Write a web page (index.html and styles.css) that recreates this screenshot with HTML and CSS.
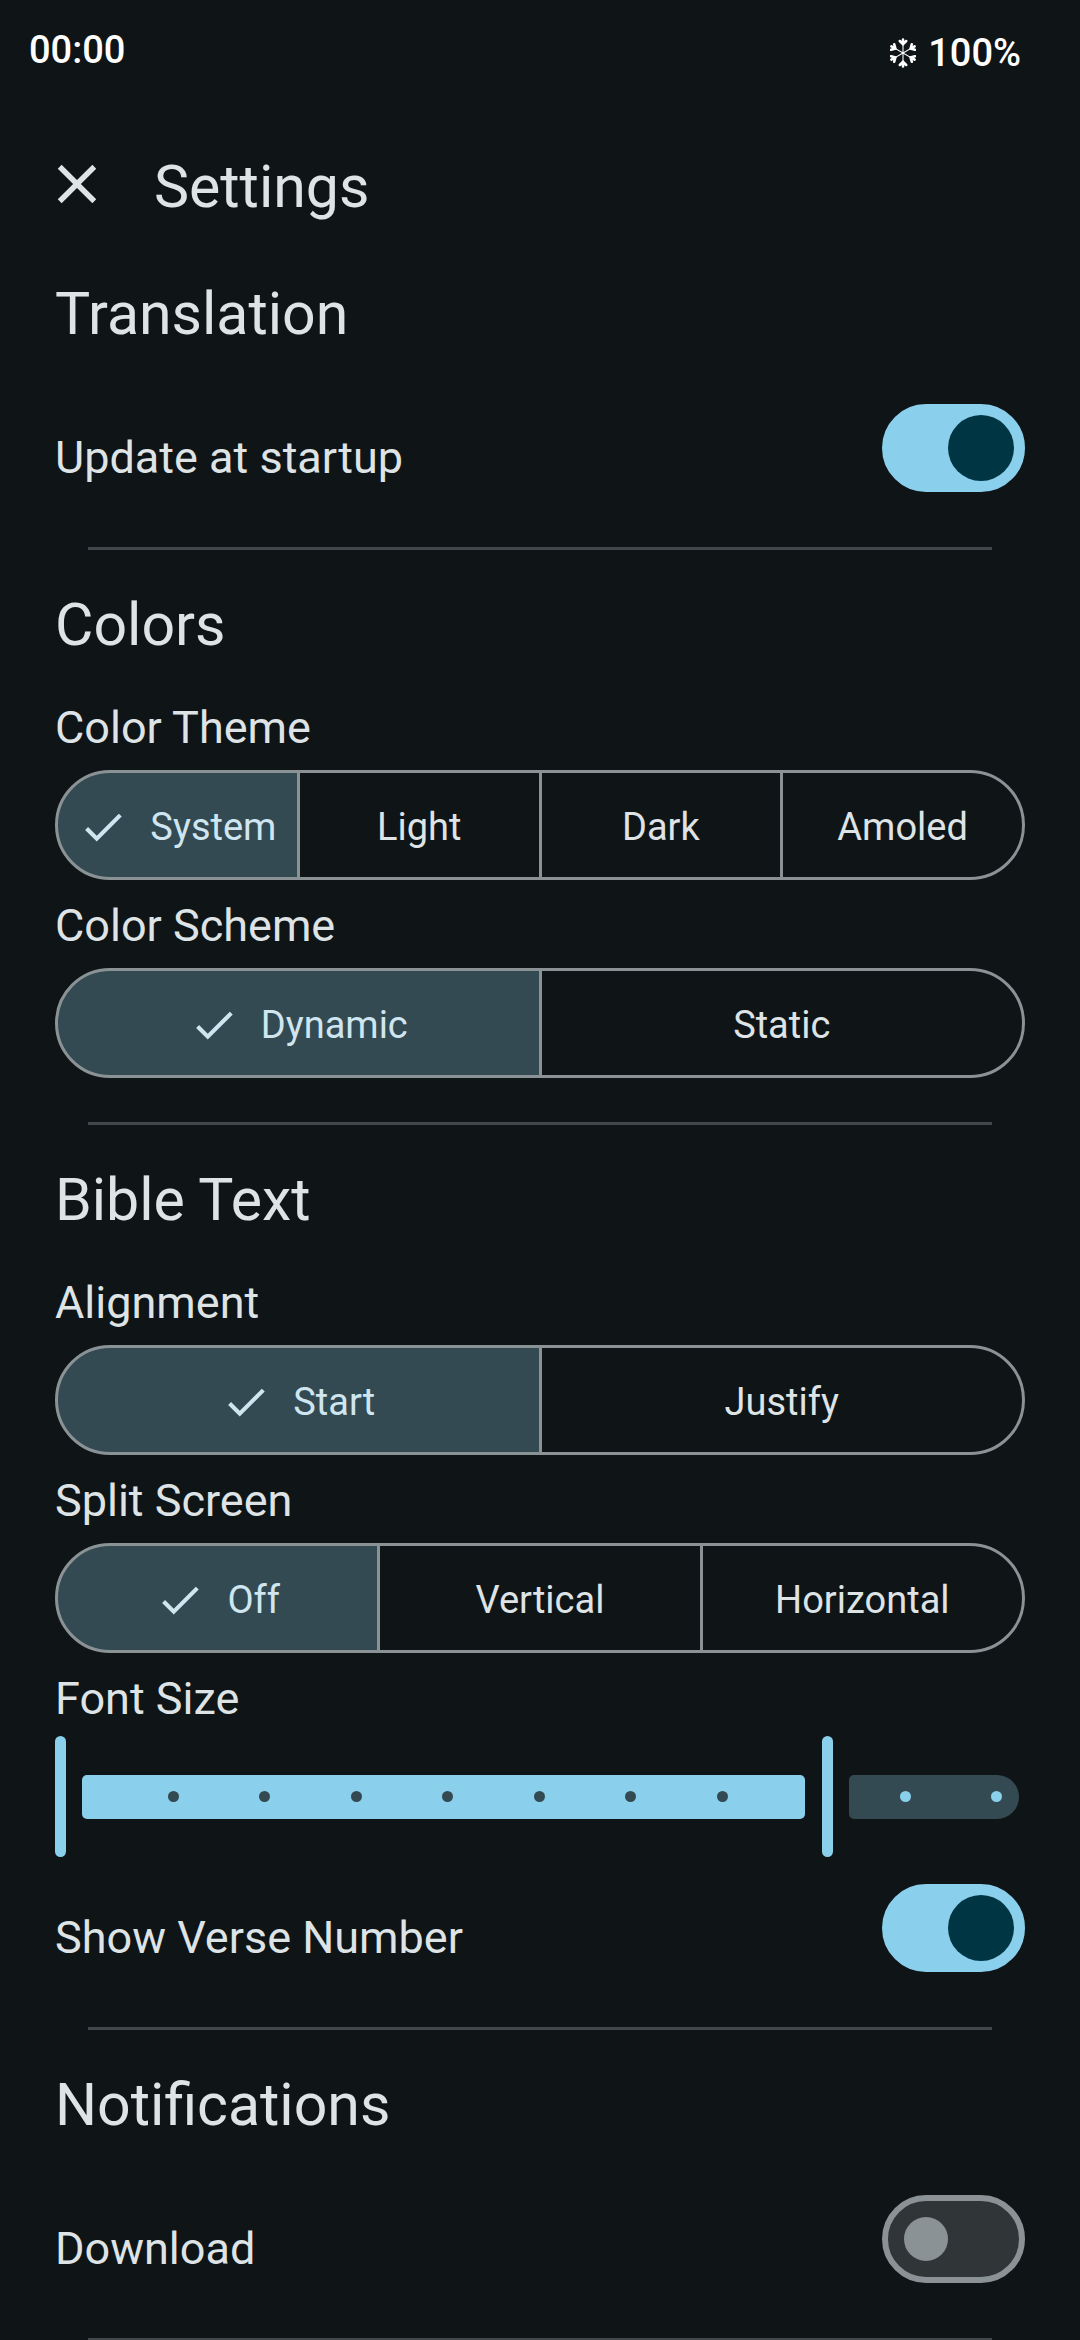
FILE: index.html
```html
<!DOCTYPE html>
<html lang="en">
<head>
  <meta charset="utf-8">
  <meta name="viewport" content="width=device-width, initial-scale=1">
  <title>Settings</title>
  <link rel="stylesheet" href="styles.css">
</head>
<body>
  <svg class="sprite" aria-hidden="true">
    <symbol id="check" viewBox="0 0 24 24">
      <path fill="currentColor" d="M9 16.17L4.83 12l-1.42 1.41L9 19 21 7l-1.41-1.41z"/>
    </symbol>
  </svg>

  <div class="status-bar">
    <span class="clock">00:00</span>
    <span class="battery">
      <svg class="snowflake" viewBox="0 0 24 28" role="img" aria-label="Power saving">
        <defs>
          <g id="arm" fill="none" stroke="currentColor" stroke-linecap="round">
            <path stroke-width="1" d="M12 14V4"/>
            <path stroke-width="2.4" d="M12 5.500V1.500M9 2.800l3 3 3-3"/>
          </g>
        </defs>
        <use href="#arm"/>
        <use href="#arm" transform="rotate(60 12 14)"/>
        <use href="#arm" transform="rotate(120 12 14)"/>
        <use href="#arm" transform="rotate(180 12 14)"/>
        <use href="#arm" transform="rotate(240 12 14)"/>
        <use href="#arm" transform="rotate(300 12 14)"/>
      </svg>
      <span>100%</span>
    </span>
  </div>

  <header class="app-bar">
    <button class="close" type="button" aria-label="Close">
      <svg class="close-icon" viewBox="0 0 24 24" aria-hidden="true">
        <path fill="currentColor" d="M19 6.410L17.590 5 12 10.590 6.410 5 5 6.410 10.590 12 5 17.590 6.410 19 12 13.410 17.590 19 19 17.590 13.410 12z"/>
      </svg>
    </button>
    <h1 class="title">Settings</h1>
  </header>

  <main class="settings">
    <section class="section">
      <h2 class="title">Translation</h2>
      <div class="switch-row switch-row-first">
        <label class="label row-label" for="update">Update at startup</label>
        <input class="switch" id="update" type="checkbox" role="switch" checked>
      </div>
    </section>
    <hr class="divider divider-after-switch">

    <section class="section">
      <h2 class="title">Colors</h2>
      <div class="field field-first">
        <div class="label" id="theme-label">Color Theme</div>
        <div class="segments" role="radiogroup" aria-labelledby="theme-label">
          <label class="segment"><input type="radio" name="theme" checked><svg class="check"><use href="#check"/></svg>System</label>
          <label class="segment"><input type="radio" name="theme"><svg class="check"><use href="#check"/></svg>Light</label>
          <label class="segment"><input type="radio" name="theme"><svg class="check"><use href="#check"/></svg>Dark</label>
          <label class="segment"><input type="radio" name="theme"><svg class="check"><use href="#check"/></svg>Amoled</label>
        </div>
      </div>
      <div class="field">
        <div class="label" id="scheme-label">Color Scheme</div>
        <div class="segments" role="radiogroup" aria-labelledby="scheme-label">
          <label class="segment"><input type="radio" name="scheme" checked><svg class="check"><use href="#check"/></svg>Dynamic</label>
          <label class="segment"><input type="radio" name="scheme"><svg class="check"><use href="#check"/></svg>Static</label>
        </div>
      </div>
    </section>
    <hr class="divider">

    <section class="section">
      <h2 class="title">Bible Text</h2>
      <div class="field field-first">
        <div class="label" id="align-label">Alignment</div>
        <div class="segments" role="radiogroup" aria-labelledby="align-label">
          <label class="segment"><input type="radio" name="align" checked><svg class="check"><use href="#check"/></svg>Start</label>
          <label class="segment"><input type="radio" name="align"><svg class="check"><use href="#check"/></svg>Justify</label>
        </div>
      </div>
      <div class="field">
        <div class="label" id="split-label">Split Screen</div>
        <div class="segments" role="radiogroup" aria-labelledby="split-label">
          <label class="segment"><input type="radio" name="split" checked><svg class="check"><use href="#check"/></svg>Off</label>
          <label class="segment"><input type="radio" name="split"><svg class="check"><use href="#check"/></svg>Vertical</label>
          <label class="segment"><input type="radio" name="split"><svg class="check"><use href="#check"/></svg>Horizontal</label>
        </div>
      </div>
      <div class="field field-slider">
        <label class="label" for="size-max">Font Size</label>
        <div class="slider">
          <div class="track"><span class="track-active"></span><span class="track-rest"></span></div>
          <div class="ticks">
            <i class="tick"></i><i class="tick"></i><i class="tick"></i><i class="tick"></i><i class="tick"></i><i class="tick"></i><i class="tick"></i><i class="tick tick-current"></i><i class="tick tick-rest"></i><i class="tick tick-rest"></i>
          </div>
          <input class="range" type="range" min="0" max="10" value="0" aria-label="Smallest font size">
          <input class="range" id="size-max" type="range" min="0" max="10" value="8">
        </div>
      </div>
      <div class="switch-row">
        <label class="label row-label" for="verse">Show Verse Number</label>
        <input class="switch" id="verse" type="checkbox" role="switch" checked>
      </div>
    </section>
    <hr class="divider divider-after-switch">

    <section class="section">
      <h2 class="title">Notifications</h2>
      <div class="switch-row switch-row-first">
        <label class="label row-label" for="download">Download</label>
        <input class="switch" id="download" type="checkbox" role="switch">
      </div>
    </section>
    <hr class="divider divider-after-switch">
  </main>
</body>
</html>
```
FILE: styles.css
```css
:root {
  --surface: #0f1416;
  --on-surface: #dee3e6;
  --primary: #8ad0ed;
  --on-primary: #003544;
  --secondary: #344a52;
  --on-secondary: #cfe6f1;
  --outline: #8a9295;
  --outline-variant: #41474b;
  --switch-off: #303638;
}

* {
  box-sizing: border-box;
}

body {
  margin: 0;
  background: var(--surface);
  color: var(--on-surface);
  font-family: Roboto, "Noto Sans", sans-serif;
}

.sprite {
  display: none;
}

/* Status bar */
.status-bar {
  display: flex;
  justify-content: space-between;
  padding: 28px 59px 0 29px;
  color: #fff;
  font-size: 38px;
  font-weight: 500;
  line-height: 44px;
}

.battery {
  display: flex;
  align-items: center;
  gap: 12px;
  padding-top: 3px;
}

.snowflake {
  width: 26px;
  height: 30px;
}

/* App bar */
.app-bar {
  display: flex;
  align-items: flex-start;
  gap: 44px;
  padding: 76px 44px 0;
}

.close {
  display: flex;
  padding: 0;
  border: 0;
  background: none;
  color: inherit;
}

.close-icon {
  width: 66px;
  height: 66px;
}

.app-bar .title {
  padding-top: 4px;
}

.title {
  margin: 0;
  font-size: 59px;
  font-weight: 400;
  line-height: 64px;
}

/* Sections */
.settings {
  padding: 20px 55px 0;
}

.section {
  padding-top: 43px;
}

.label {
  display: block;
  font-size: 45px;
  line-height: 56px;
}

.divider {
  height: 3px;
  margin: 44px 33px 0;
  border: 0;
  background: var(--outline-variant);
}

.divider-after-switch {
  margin-top: 55px;
}

.field {
  display: grid;
  gap: 14px;
  margin-top: 18px;
}

.field-first {
  margin-top: 43px;
}

.field-slider {
  gap: 9px;
}

/* Switches */
.switch-row {
  display: flex;
  align-items: flex-end;
  justify-content: space-between;
  margin-top: 27px;
}

.switch-row-first {
  margin-top: 58px;
}

.row-label {
  line-height: 68px;
}

.switch {
  appearance: none;
  display: flex;
  align-items: center;
  width: 143px;
  height: 88px;
  margin: 0;
  padding: 0 16px;
  border: 6px solid var(--outline);
  border-radius: 44px;
  background: var(--switch-off);
}

.switch::before {
  content: "";
  width: 44px;
  height: 44px;
  border-radius: 50%;
  background: var(--outline);
}

.switch:checked {
  justify-content: flex-end;
  padding: 0 5px;
  border-color: var(--primary);
  background: var(--primary);
}

.switch:checked::before {
  width: 66px;
  height: 66px;
  background: var(--on-primary);
}

/* Segmented buttons */
.segments {
  display: flex;
}

.segment {
  display: flex;
  flex: 1;
  align-items: center;
  justify-content: center;
  gap: 22px;
  height: 110px;
  padding-top: 3px;
  border: 3px solid var(--outline);
  font-size: 38px;
  line-height: 44px;
}

.segment + .segment {
  margin-left: -3px;
}

.segment:first-child {
  border-radius: 55px 0 0 55px;
}

.segment:last-child {
  border-radius: 0 55px 55px 0;
}

.segment input {
  position: absolute;
  margin: 0;
  opacity: 0;
}

.check {
  display: none;
  width: 50px;
  height: 50px;
}

.segment:has(:checked) {
  background: var(--secondary);
  color: var(--on-secondary);
}

.segment :checked + .check {
  display: block;
}

/* Slider */
.slider {
  display: grid;
  align-items: center;
}

.slider > * {
  grid-area: 1 / 1;
}

.track {
  display: flex;
  gap: 44px;
  height: 44px;
  padding: 0 6px 0 27px;
}

.track-active {
  flex: 723;
  border-radius: 5px;
  background: var(--primary);
}

.track-rest {
  flex: 170;
  border-radius: 5px 22px 22px 5px;
  background: var(--secondary);
}

.ticks {
  display: flex;
  justify-content: space-between;
  padding: 0 23px 0 113px;
}

.tick {
  width: 11px;
  height: 11px;
  border-radius: 50%;
  background: var(--secondary);
}

.tick-current {
  visibility: hidden;
}

.tick-rest {
  background: var(--primary);
}

.range {
  appearance: none;
  width: 100%;
  height: 121px;
  margin: 0;
  background: none;
  pointer-events: none;
}

.range::-webkit-slider-thumb {
  appearance: none;
  width: 11px;
  height: 121px;
  border-radius: 6px;
  background: var(--primary);
  pointer-events: auto;
}

.range::-moz-range-thumb {
  width: 11px;
  height: 121px;
  border: 0;
  border-radius: 6px;
  background: var(--primary);
  pointer-events: auto;
}
```
